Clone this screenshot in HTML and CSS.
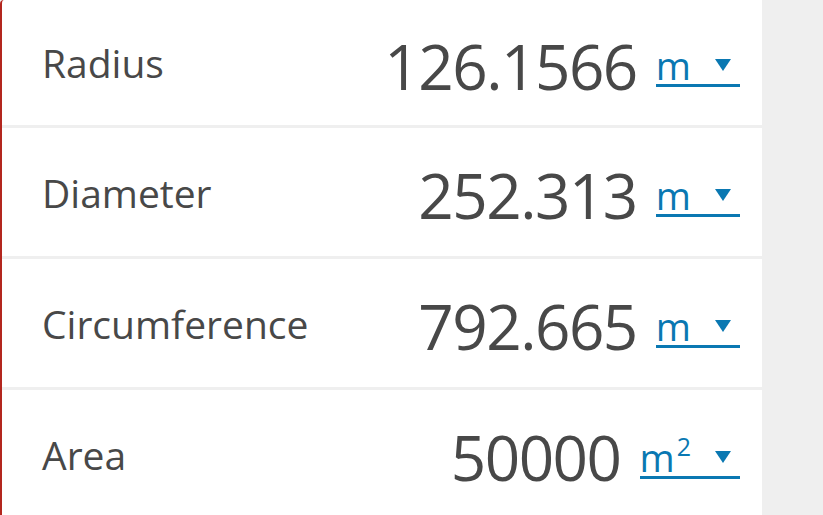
FILE: index.html
```html
<!DOCTYPE html>
<html>
<head>
<meta charset="utf-8">
<link rel="stylesheet" href="styles.css">
</head>
<body>
<div class="page">
  <div class="panel">
    <div class="row first">
      <span class="label">Radius</span>
      <span class="value">126.1566</span>
      <span class="unit"><span class="unit-text">m</span><span class="caret"></span></span>
    </div>
    <div class="row">
      <span class="label">Diameter</span>
      <span class="value">252.313</span>
      <span class="unit"><span class="unit-text">m</span><span class="caret"></span></span>
    </div>
    <div class="row">
      <span class="label">Circumference</span>
      <span class="value">792.665</span>
      <span class="unit"><span class="unit-text">m</span><span class="caret"></span></span>
    </div>
    <div class="row last">
      <span class="label">Area</span>
      <span class="value">50000</span>
      <span class="unit"><span class="unit-text">m<sup class="sq">2</sup></span><span class="caret"></span></span>
    </div>
  </div>
</div>
</body>
</html>
```
FILE: styles.css
```css
html, body {
  margin: 0;
  padding: 0;
}
body {
  background: #efefef;
  font-family: "Open Sans", "Noto Sans", sans-serif;
  color: #484848;
  overflow: hidden;
}
.page {
  width: 823px;
  height: 515px;
  display: flex;
}
.panel {
  width: 760px;
  background: #ffffff;
  border-left: 2px solid #b3261e;
  border-top-left-radius: 4px;
  display: flex;
  flex-direction: column;
}
.row {
  height: 128px;
  flex: none;
  display: flex;
  align-items: center;
  padding: 0 22px 0 40px;
  border-bottom: 3px solid #efefef;
}
.row.first {
  height: 125px;
}
.row.last {
  border-bottom: none;
}
.label {
  flex: 1;
  font-size: 39px;
  line-height: 1;
}
.value {
  font-size: 62px;
  line-height: 1;
  letter-spacing: -1.5px;
  padding-top: 6px;
}
.unit {
  margin-left: 19px;
  margin-top: 8px;
  display: flex;
  align-items: center;
  color: #0a78b2;
  border-bottom: 3px solid #0a78b2;
  font-size: 38px;
  line-height: 1;
  padding-right: 9px;
}
.sq {
  font-size: 25px;
  vertical-align: 16px;
  line-height: 0;
  margin-left: 2px;
}
.caret {
  margin-left: 24px;
  width: 0;
  height: 0;
  border-left: 8px solid transparent;
  border-right: 8px solid transparent;
  border-top: 12px solid #0a78b2;
}
```
